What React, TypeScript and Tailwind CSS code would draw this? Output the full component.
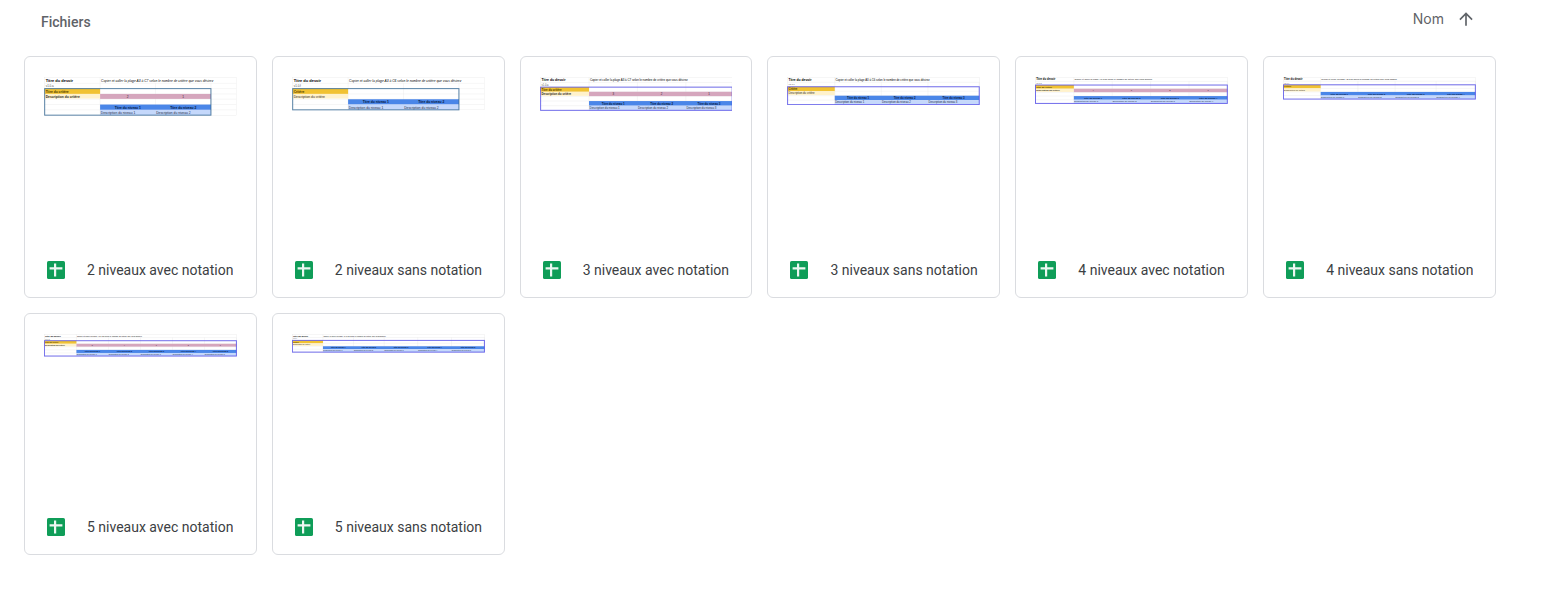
import React from "react";
import { MdArrowUpward } from "react-icons/md";

type SheetFile = {
  name: string;
  levels: number;
  graded: boolean;
  version: string;
  /** Width of the sheet's columns, criterion column first. */
  columns: number[];
  spare?: number;
  outline: string;
};

const VIOLET = "#4f4ae8";
const BLUE = "#2f6491";

const files: SheetFile[] = [
  { name: "2 niveaux avec notation", levels: 2, graded: true, version: "v1.0.a", columns: [167, 167, 167], spare: 76, outline: BLUE },
  { name: "2 niveaux sans notation", levels: 2, graded: false, version: "v1.0.f", columns: [167, 167, 167], spare: 76, outline: BLUE },
  { name: "3 niveaux avec notation", levels: 3, graded: true, version: "v1.0.a", columns: [167, 167, 167, 160], outline: VIOLET },
  { name: "3 niveaux sans notation", levels: 3, graded: false, version: "v1.0.f", columns: [169, 167, 167, 184], outline: VIOLET },
  { name: "4 niveaux avec notation", levels: 4, graded: true, version: "v1.0.a", columns: [167, 167, 167, 167, 167], outline: VIOLET },
  { name: "4 niveaux sans notation", levels: 4, graded: false, version: "v1.0.f", columns: [167, 167, 167, 184, 176], outline: VIOLET },
  { name: "5 niveaux avec notation", levels: 5, graded: true, version: "v1.0.a", columns: [167, 167, 167, 167, 167, 167], outline: VIOLET },
  { name: "5 niveaux sans notation", levels: 5, graded: false, version: "v1.0.f", columns: [167, 167, 167, 184, 184, 180], outline: VIOLET },
];

const ROW = 16;
const TOP = 34;

function SheetPreview({ file }: { file: SheetFile }) {
  const { columns, spare = 0, graded, outline, levels } = file;
  const table = columns.reduce((a, b) => a + b, 0);
  const width = table + spare;
  const edges = columns.map((_, i) => columns.slice(0, i).reduce((a, b) => a + b, 0));
  const headY = TOP + ROW * (graded ? 3 : 2);
  const height = headY + ROW * 2;
  const first = columns[0];
  const rows = Array.from({ length: Math.round((height - TOP) / ROW) }, (_, i) => TOP + i * ROW);
  const range = graded ? "A3 à C7" : "A3 à C6";
  const scale = width / 577;

  return (
    <svg
      viewBox={`-2 -1 ${width + 4} ${height + 4}`}
      className="block w-full"
      fontFamily="'Liberation Sans', Arial, sans-serif"
      fontSize="10"
      fill="#000000"
      role="img"
      aria-label={file.name}
    >
      <g stroke="#e4e4e4" strokeWidth={scale} fill="none">
        <rect x="0" y="0" width={width} height={height} />
        <path d={`M0 18H${width}`} />
        {rows.map((y) => (
          <path key={y} d={`M0 ${y}H${width}`} />
        ))}
        {[...edges.slice(1), table].map((x) => (
          <path key={x} d={`M${x} ${x === first ? 0 : 18}V${height}`} />
        ))}
      </g>
      <rect x="0" y={TOP} width={first} height={ROW} fill="#f1c232" />
      <rect x="0" y={TOP + ROW} width={first} height={ROW - 2} fill="#fff2cc" />
      {graded && <rect x={first} y={TOP + ROW} width={table - first} height={ROW - 1} fill="#d5a6bd" />}
      <rect x={first} y={headY} width={table - first} height={ROW} fill="#4a86e8" />
      <rect x={first} y={headY + ROW} width={table - first} height={ROW} fill="#c5d8fb" />
      <text x="3" y="13" fontSize="12" fontWeight="700">Titre du devoir</text>
      <text x={first + 3} y="13" fontStyle={levels === 2 ? "italic" : "normal"}>
        Copier et coller la plage {range} selon le nombre de critère que vous désirez
      </text>
      <text x="3" y="29" fontSize="9" fill="#555555">{file.version}</text>
      <text x="3" y={TOP + 12} fontWeight="700" fill="#4a3800">{graded ? "Titre du critère" : "Critère"}</text>
      <text x="3" y={TOP + ROW + 11} fontWeight={graded ? 700 : 400} fill="#2c2820">Description du critère</text>
      {edges.slice(1).map((x, i) => (
        <g key={x}>
          {graded && (
            <text x={x + columns[i + 1] / 2} y={TOP + ROW + 11} textAnchor="middle" fill="#3c2430">{levels - i}</text>
          )}
          <text x={x + columns[i + 1] / 2} y={headY + 12} textAnchor="middle" fontWeight="700" fill="#04163a">
            Titre du niveau {i + 1}
          </text>
          <text x={x + 2} y={headY + ROW + 12} fill="#1c2a44">Description du niveau {i + 1}</text>
        </g>
      ))}
      <rect x="0" y={TOP} width={table} height={height - TOP} fill="none" stroke={outline} strokeOpacity="0.8" strokeWidth={3 * scale} />
    </svg>
  );
}

function SheetIcon() {
  return (
    <svg viewBox="0 0 18 18" className="size-[18px] shrink-0" aria-hidden="true">
      <rect width="18" height="18" rx="1.6" fill="#0f9d58" />
      <path d="M7 2.600H9.200V6.200H15.400V8.600H9.200V15.600H7V8.600H2.600V6.200H7z" fill="#ffffff" fillOpacity="0.92" />
    </svg>
  );
}

function FileCard({ file }: { file: SheetFile }) {
  return (
    <li>
      <a
        href="#"
        className="flex h-[242px] flex-col justify-between overflow-hidden rounded-md border border-[#dadce0] bg-white"
      >
        <div className="px-[19px] pt-5">
          <SheetPreview file={file} />
        </div>
        <div className="flex h-[54px] items-center gap-[22px] pl-[22px]">
          <SheetIcon />
          <span className="truncate text-sm text-[#3c4043]">{file.name}</span>
        </div>
      </a>
    </li>
  );
}

export default function App() {
  return (
    <main className="min-h-screen bg-white pr-[53px] pb-10 pl-6 font-['Roboto',sans-serif] text-[#5f6368]">
      <header className="flex h-14 items-start justify-between pr-5 pl-[17px]">
        <h2 className="pt-3 text-sm font-medium">Fichiers</h2>
        <button type="button" className="flex items-center gap-3 pt-[9px] font-['Inter',sans-serif] text-sm">
          Nom
          <MdArrowUpward className="size-5" />
        </button>
      </header>
      <ul className="grid grid-cols-2 gap-[15px] md:grid-cols-4 xl:grid-cols-6">
        {files.map((file) => (
          <FileCard key={file.name} file={file} />
        ))}
      </ul>
    </main>
  );
}
